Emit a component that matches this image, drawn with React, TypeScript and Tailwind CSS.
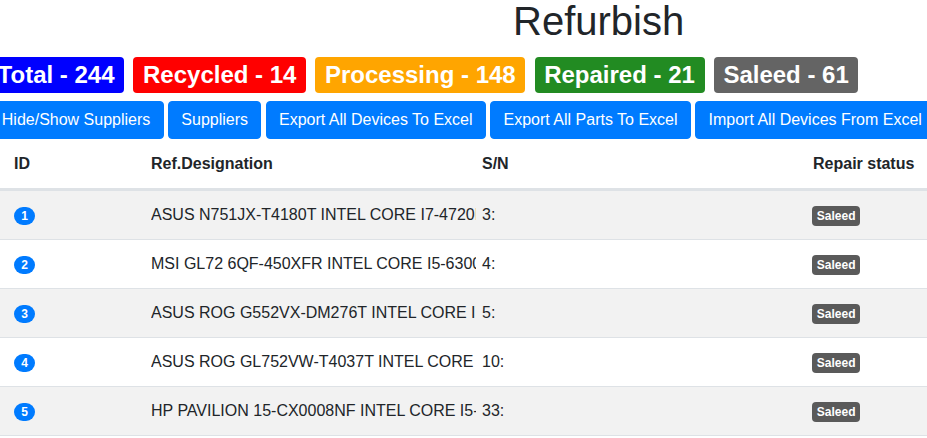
const counts = [
  { label: "Total", value: 244, bg: "bg-[#0000ff]" },
  { label: "Recycled", value: 14, bg: "bg-[#ff0000]" },
  { label: "Processing", value: 148, bg: "bg-[#ffa500]" },
  { label: "Repaired", value: 21, bg: "bg-[#228b22]" },
  { label: "Saleed", value: 61, bg: "bg-[#646464]" },
];

const actions = [
  "Hide/Show Suppliers",
  "Suppliers",
  "Export All Devices To Excel",
  "Export All Parts To Excel",
  "Import All Devices From Excel",
];

const devices = [
  { id: 1, ref: "ASUS N751JX-T4180T INTEL CORE I7-4720HQ 2.6GHZ", sn: "3:", status: "Saleed" },
  { id: 2, ref: "MSI GL72 6QF-450XFR INTEL CORE I5-6300HQ 2.3GHZ", sn: "4:", status: "Saleed" },
  { id: 3, ref: "ASUS ROG G552VX-DM276T INTEL CORE I7-6700HQ", sn: "5:", status: "Saleed" },
  { id: 4, ref: "ASUS ROG GL752VW-T4037T INTEL CORE I7-6700HQ", sn: "10:", status: "Saleed" },
  { id: 5, ref: "HP PAVILION 15-CX0008NF INTEL CORE I5-8300H", sn: "33:", status: "Saleed" },
];

export default function App() {
  return (
    <div className="w-[927px] h-[438px] overflow-hidden bg-white text-[#212529] font-['Liberation_Sans',Arial,sans-serif]">
      <h1 className="mt-[-3px] mb-[12px] pl-[513px] text-[40px] leading-[48px] font-normal whitespace-nowrap">
        Refurbish
      </h1>

      <div className="flex gap-[9.3px] ml-[-12px] whitespace-nowrap">
        {counts.map((c) => (
          <span
            key={c.label}
            className={`${c.bg} text-white font-bold text-[24px] leading-none px-[0.4em] py-[0.25em] rounded-[4px]`}
          >
            {c.label} - {c.value}
          </span>
        ))}
      </div>

      <div className="flex gap-[4.4px] ml-[-11.5px] mt-[8px] whitespace-nowrap">
        {actions.map((a) => (
          <button
            key={a}
            className="bg-[#007bff] border border-[#007bff] text-white text-[16px] leading-[24px] px-[12.3px] py-[6px] rounded-[4px] shrink-0"
          >
            {a}
          </button>
        ))}
      </div>

      <div className="grid grid-cols-[151px_331px_331px_1fr] font-bold text-[16px] leading-[24px] pt-[13px] pb-[12px] border-b-2 border-[#dee2e6]">
        <div className="pl-[14px]">ID</div>
        <div>Ref.Designation</div>
        <div>S/N</div>
        <div className="whitespace-nowrap">Repair status</div>
      </div>

      {devices.map((d, i) => (
        <div
          key={d.id}
          className={`grid grid-cols-[151px_331px_331px_1fr] items-center h-[49px] border-t border-[#dee2e6] text-[16px] leading-[24px] ${
            i % 2 === 0 ? "bg-[#f2f2f2]" : "bg-white"
          }`}
        >
          <div className="pl-[14px]">
            <span className="inline-block bg-[#007bff] text-white font-bold text-[12px] leading-none px-[0.6em] py-[0.25em] rounded-full">
              {d.id}
            </span>
          </div>
          <div className="w-[325px] overflow-hidden whitespace-nowrap">{d.ref}</div>
          <div>{d.sn}</div>
          <div className="ml-[-1px]">
            <span className="inline-block bg-[#5a5a5a] text-white font-bold text-[12px] leading-none px-[0.4em] py-[0.3em] rounded-[4px]">
              {d.status}
            </span>
          </div>
        </div>
      ))}
      <div className="border-t border-[#dee2e6]" />
    </div>
  );
}
